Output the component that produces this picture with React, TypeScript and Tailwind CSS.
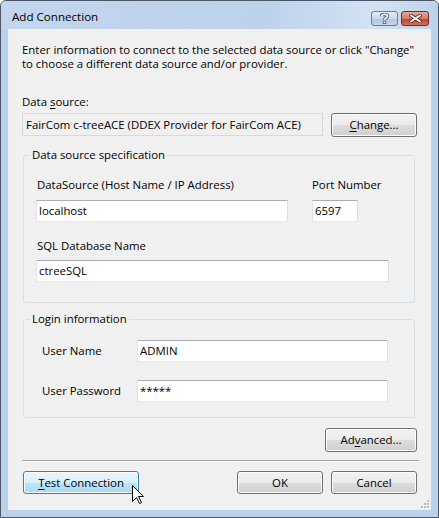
import { ReactElement, ReactNode } from 'react';

type ButtonProps = { children: ReactNode; className?: string; hot?: boolean };

const Win7Button = ({ children, className, hot }: ButtonProps): ReactElement => (
  <div
    className={`flex items-center justify-center rounded-[3px] border text-black shadow-[inset_0_0_0_1px_#fcfcfc] ${
      hot
        ? 'border-[#3c7fb1] bg-[linear-gradient(to_bottom,#eaf6fd_0%,#d9f0fc_50%,#bee6fd_50%,#a7d9f5_100%)]'
        : 'border-[#707070] bg-[linear-gradient(to_bottom,#f2f2f2_0%,#ebebeb_50%,#dddddd_50%,#cfcfcf_100%)]'
    } ${className ?? ''}`}
  >
    {children}
  </div>
);

const TextBox = ({ value, className }: { value: string; className?: string }): ReactElement => (
  <div
    className={`flex h-[22px] items-center border border-t-[#abadb3] border-r-[#dbdfe6] border-b-[#e3e9ef] border-l-[#e2e3ea] bg-white pl-[2px] text-black ${className ?? ''}`}
  >
    {value}
  </div>
);

const App = (): ReactElement => {
  return (
    <div className="relative h-[518px] w-[439px] bg-white font-['Open_Sans',sans-serif] text-[11.4px] leading-[14px]">
      <div className="flex h-full w-full flex-col rounded-t-[6px] border border-[#4a5566] bg-[#b9d1ea]">
        {/* title bar */}
        <div className="flex h-[28px] items-start rounded-t-[5px] bg-[linear-gradient(100deg,#c2d6ed_0%,#bcd2eb_60%,#d3e2f3_85%,#bcd2ea_100%)] pl-[11px] pr-[9px] pt-[9px]">
          <span className="text-[11.6px] leading-[14px] text-black">Add Connection</span>
          <div className="ml-auto mt-[1px] flex gap-[3px]">
            <div className="flex h-[15px] w-[27px] items-center justify-center rounded-[3px] border border-[#6b7f99] bg-[linear-gradient(to_bottom,#e3ecf6_0%,#c9d8ea_50%,#b4c7de_51%,#c3d4e8_100%)]">
              <svg width="9" height="11" viewBox="0 0 9 11">
                <path d="M1.5 3.2 C1.5 0.8 7.5 0.8 7.5 3.2 C7.5 5 4.5 5 4.5 6.8" fill="none" stroke="#4d5f77" strokeWidth="3.4" />
                <path d="M1.5 3.2 C1.5 0.8 7.5 0.8 7.5 3.2 C7.5 5 4.5 5 4.5 6.8" fill="none" stroke="#fff" strokeWidth="1.6" />
                <rect x="2.8" y="7.8" width="3.4" height="3.2" fill="#4d5f77" />
                <rect x="3.6" y="8.6" width="1.8" height="1.6" fill="#fff" />
              </svg>
            </div>
            <div className="flex h-[15px] w-[28px] items-center justify-center rounded-[3px] border border-[#7a2a1f] bg-[linear-gradient(to_bottom,#e5a99d_0%,#d67a6a_50%,#c2432f_51%,#d5705a_100%)]">
              <svg width="13" height="9" viewBox="0 0 13 9">
                <path d="M2 1.5 L11 7.5 M11 1.5 L2 7.5" stroke="#5b231b" strokeWidth="3.6" strokeLinecap="square" />
                <path d="M2 1.5 L11 7.5 M11 1.5 L2 7.5" stroke="#fff" strokeWidth="1.8" strokeLinecap="square" />
              </svg>
            </div>
          </div>
        </div>

        {/* client area */}
        <div className="mx-[7px] mb-[7px] flex flex-1 flex-col bg-[#f0f0f0] text-black">
          <p className="px-[14px] pt-[14px]">
            Enter information to connect to the selected data source or click &quot;Change&quot;
            <br />
            to choose a different data source and/or provider.
          </p>

          <div className="mt-[24px] pl-[14px]">
            Data <span className="underline underline-offset-[2px]">s</span>ource:
          </div>
          <div className="mt-[4px] flex items-start gap-[8px] pl-[14px] pr-[14px]">
            <div className="flex h-[23px] flex-1 items-center border border-[#d9d9d9] bg-[#f0f0f0] pl-[3px]">
              FairCom c-treeACE (DDEX Provider for FairCom ACE)
            </div>
            <Win7Button className="h-[24px] w-[86px]">
              <span>
                <span className="underline underline-offset-[2px]">C</span>hange...
              </span>
            </Win7Button>
          </div>

          <fieldset className="ml-[15px] mt-[11px] w-[392px] rounded-[3px] border border-[#d5dfe5] pb-[20px]">
            <legend className="ml-[6px] px-[2px] leading-[14px]">Data source specification</legend>
            <div className="pl-[12px]">
              <div className="mt-[16px] flex">
                <div className="flex w-[252px] flex-col">
                  <span className="pl-[1px]">DataSource (Host Name / IP Address)</span>
                  <TextBox value="localhost" className="mt-[8px]" />
                </div>
                <div className="ml-[24px] flex flex-col">
                  <span>Port Number</span>
                  <TextBox value="6597" className="mt-[8px] w-[46px]" />
                </div>
              </div>
              <div className="mt-[17px] pl-[1px]">SQL Database Name</div>
              <TextBox value="ctreeSQL" className="mt-[7px] w-[353px]" />
            </div>
          </fieldset>

          <fieldset className="ml-[15px] mt-[9px] w-[392px] rounded-[3px] border border-[#d5dfe5] pb-[15px]">
            <legend className="ml-[6px] px-[2px] leading-[14px]">Login information</legend>
            <div className="pl-[18px]">
              <div className="mt-[14px] flex items-center">
                <span className="w-[95px]">User Name</span>
                <TextBox value="ADMIN" className="w-[251px]" />
              </div>
              <div className="mt-[18px] flex items-center">
                <span className="w-[95px]">User Password</span>
                <TextBox value="*****" className="w-[251px]" />
              </div>
            </div>
          </fieldset>

          <div className="mt-[10px] flex justify-end pr-[14px]">
            <Win7Button className="h-[24px] w-[92px]">
              <span>
                Ad<span className="underline underline-offset-[2px]">v</span>anced...
              </span>
            </Win7Button>
          </div>

          <div className="ml-[14px] mr-[12px] mt-[8px] h-[2px] border-t border-b border-t-[#a0a0a0] border-b-white" />

          <div className="mt-[9px] flex items-start pl-[15px] pr-[14px]">
            <Win7Button hot className="h-[23px] w-[116px]">
              <span>
                <span className="underline underline-offset-[2px]">T</span>est Connection
              </span>
            </Win7Button>
            <Win7Button className="ml-auto h-[23px] w-[86px]">OK</Win7Button>
            <Win7Button className="ml-[8px] h-[23px] w-[86px]">Cancel</Win7Button>
          </div>
        </div>
      </div>

      {/* size grip */}
      <svg className="absolute left-[420px] top-[499px]" width="10" height="10" viewBox="0 0 10 10">
        {[
          [7, 1],
          [4, 4],
          [7, 4],
          [1, 7],
          [4, 7],
          [7, 7],
        ].map(([x, y]) => (
          <g key={`${x}-${y}`}>
            <rect x={x + 1} y={y + 1} width="2" height="2" fill="#ffffff" />
            <rect x={x} y={y} width="2" height="2" fill="#b6bcc6" />
          </g>
        ))}
      </svg>

      {/* mouse pointer */}
      <svg className="absolute left-[132px] top-[485px]" width="13" height="20" viewBox="0 0 13 20">
        <path
          d="M0.5 0.5 L0.5 16.5 L4.5 12.5 L7.5 18.5 L9.5 17.5 L6.5 11.5 L11.5 11.5 Z"
          fill="#fff"
          stroke="#000"
          strokeWidth="1"
        />
      </svg>
    </div>
  );
};

export default App;
